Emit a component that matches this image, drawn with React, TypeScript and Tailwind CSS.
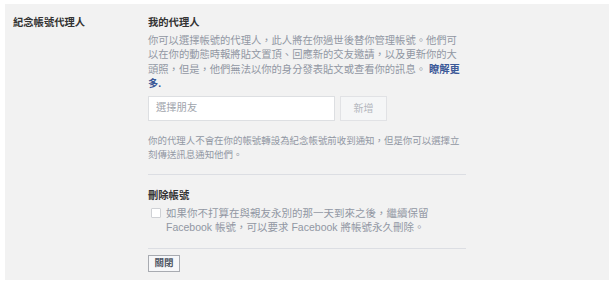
import React from "react"

const font = { fontFamily: '"Liberation Sans", "Noto Sans CJK TC", sans-serif' }

export default function App() {
  return (
    <div className="h-[285px] w-[615px] bg-white pl-[5px] pt-[4px]" style={font}>
      <div className="flex h-[276px] w-[604px] bg-[#f2f2f2] pl-[8px] pt-[12px]">
        <div className="w-[135px] shrink-0 text-[10.3px] font-bold leading-[14px] text-[#333]">
          紀念帳號代理人
        </div>

        <div className="w-[318px]">
          <div className="text-[10.3px] font-bold leading-[14px] text-[#333]">我的代理人</div>
          <p className="mt-[4px] w-[313px] text-[10.3px] leading-[14.4px] text-[#9197a3]">
            你可以選擇帳號的代理人，此人將在你過世後替你管理帳號。他們可以在你的動態時報將貼文置頂、回應新的交友邀請，以及更新你的大頭照，但是，他們無法以你的身分發表貼文或查看你的訊息。{" "}
            <a className="font-bold text-[#3b5998]">瞭解更多.</a>
          </p>

          <div className="mt-[4px] flex gap-[5px]">
            <div className="flex h-[25px] w-[187px] items-center border border-[#dddfe2] bg-white px-[7px] text-[10.3px] text-[#a0a4ab]">
              選擇朋友
            </div>
            <button className="h-[25px] w-[47px] border border-[#e1e2e5] bg-[#f5f6f7] text-[10px] text-[#b4b7bd]">
              新增
            </button>
          </div>

          <p className="mt-[13px] w-[318px] text-[9.45px] leading-[14px] text-[#9197a3]">
            你的代理人不會在你的帳號轉設為紀念帳號前收到通知，但是你可以選擇立刻傳送訊息通知他們。
          </p>

          <div className="mt-[12px] h-px w-[318px] bg-[#dcdee3]" />

          <div className="mt-[14px] text-[10.3px] font-bold leading-[14px] text-[#333]">刪除帳號</div>

          <div className="mt-[3px] flex">
            <span className="ml-[3px] mt-[2px] h-[10px] w-[10px] shrink-0 rounded-[1px] border border-[#cfd1d5] bg-white" />
            <p className="ml-[5px] w-[300px] text-[10.5px] leading-[14px] text-[#9197a3]">
              如果你不打算在與親友永別的那一天到來之後，繼續保留 Facebook 帳號，可以要求 Facebook 將帳號永久刪除。
            </p>
          </div>

          <div className="mt-[14px] h-px w-[318px] bg-[#dcdee3]" />

          <button className="mt-[6px] flex h-[17px] w-[32px] items-center justify-center border border-[#a8abb1] bg-[#f6f7f9] text-[9.5px] font-bold text-[#4e5665]">
            關閉
          </button>
        </div>
      </div>
    </div>
  )
}
